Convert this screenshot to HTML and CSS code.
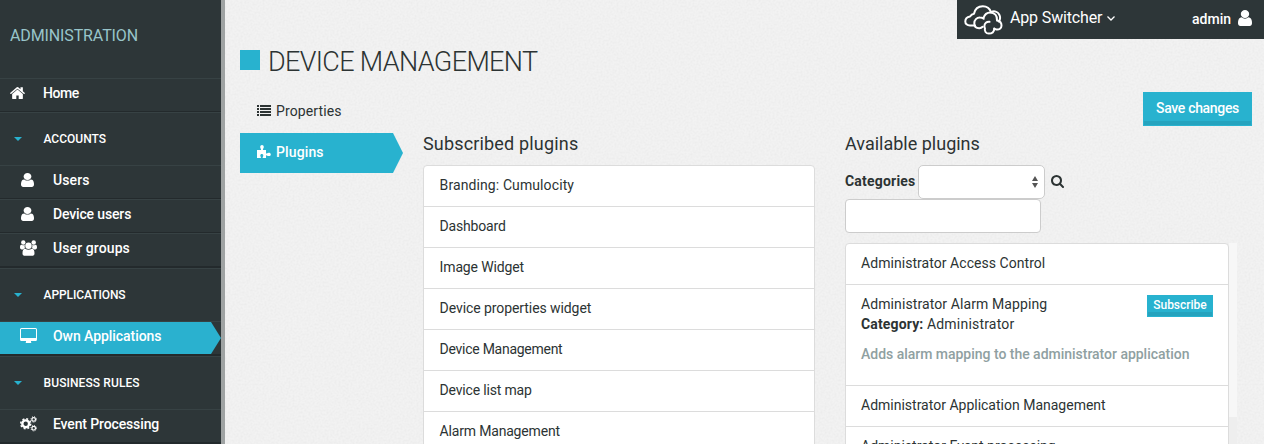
FILE: index.html
```html
<!DOCTYPE html>
<html lang="en">
<head>
<meta charset="utf-8">
<title>Administration</title>
<link rel="stylesheet" href="styles.css">
</head>
<body>
<svg class="defs" aria-hidden="true">
  <symbol id="user" viewBox="256 128 1280 1536" preserveAspectRatio="none"><path d="M1536 1399q0 109-62.500 187t-150.500 78h-854q-88 0-150.500-78t-62.500-187q0-85 8.500-160.500t31.500-152 58.500-131 94-89 134.500-34.500q131 128 313 128t313-128q76 0 134.500 34.500t94 89 58.500 131 31.500 152 8.500 160.500zm-256-887q0 159-112.500 271.500t-271.500 112.500-271.500-112.500-112.500-271.500 112.500-271.500 271.500-112.500 271.500 112.500 112.500 271.500z"/></symbol>
</svg>
<div class="app">
  <aside class="sidebar">
    <div class="brand"><span class="t-brand">ADMINISTRATION</span></div>
    <a class="row home"><svg class="icon-home" viewBox="89 240 1614 1296" preserveAspectRatio="none"><path d="M1472 992v480q0 26-19 45t-45 19h-384v-384h-256v384h-384q-26 0-45-19t-19-45v-480q0-1 .5-3t.5-3l575-474 575 474q1 2 1 6zm223-69l-62 74q-8 9-21 11h-3q-13 0-21-7l-692-577-692 577q-12 8-24 7-13-2-21-11l-62-74q-8-10-7-23.500t11-21.500l719-599q32-26 76-26t76 26l244 204v-195q0-14 9-23t23-9h192q14 0 23 9t9 23v408l219 182q10 8 11 21.500t-7 23.500z"/></svg><span class="t-home">Home</span></a>
    <div class="section"><i class="caret"></i><span class="t-accounts">ACCOUNTS</span></div>
    <div class="group">
      <a class="row"><span class="ico"><svg class="icon-user"><use href="#user"/></svg></span><span class="t-users">Users</span></a>
      <a class="row"><span class="ico"><svg class="icon-user"><use href="#user"/></svg></span><span class="t-devusers">Device users</span></a>
      <a class="row"><span class="ico wide"><svg class="icon-users" viewBox="0 0 17 16"><circle cx="3.300" cy="2.500" r="2.200"/><circle cx="13.700" cy="2.500" r="2.200"/><path d="M0 7.200C0 5.400.8 4.700 2 4.900c1 .5 2 .5 3 .1-.6 1.200-.4 2.300.1 3.200-1 .1-1.600.6-2.100 1.200H1.800C.6 9.400 0 8.600 0 7.200zM17 7.200c0-1.800-.8-2.500-2-2.300-1 .5-2 .5-3 .1.600 1.200.4 2.300-.1 3.200 1 .1 1.600.6 2.100 1.200h1.200c1.200 0 1.800-.8 1.800-2.200z"/><circle cx="8.500" cy="5.800" r="3.200"/><path d="M2.500 13.400c0-2.700.7-4.600 2.800-4.600 1.900 1.400 4.500 1.400 6.400 0 2.100 0 2.800 1.900 2.800 4.600 0 1.500-.9 2.400-2.200 2.400H4.700c-1.300 0-2.200-.9-2.200-2.400z"/></svg></span><span class="t-groups">User groups</span></a>
    </div>
    <div class="section"><i class="caret"></i><span class="t-apps">APPLICATIONS</span></div>
    <div class="group">
      <a class="row"><span class="active"><span class="ico wide"><svg class="icon-desktop" viewBox="0 0 17 15"><path fill-rule="evenodd" d="M1.500 0h14A1.500 1.500 0 0 1 17 1.500v10a1.500 1.500 0 0 1-1.500 1.500H11v1.200l.6.8H5.400l.6-.8V13H1.500A1.500 1.500 0 0 1 0 11.500v-10A1.500 1.500 0 0 1 1.500 0zM1 1.500V10h15V1.500a.5.500 0 0 0-.5-.5h-14a.5.500 0 0 0-.5.500z"/></svg></span><span class="t-own">Own Applications</span></span></a>
    </div>
    <div class="section"><i class="caret"></i><span class="t-rules">BUSINESS RULES</span></div>
    <div class="group">
      <a class="row"><span class="ico wide"><svg class="icon-cogs" viewBox="0 0 17 16"><g fill="none" stroke="#fff"><circle cx="5.700" cy="7.800" r="3.400" stroke-width="2.400"/><circle cx="5.700" cy="7.800" r="5" stroke-width="1.500" stroke-dasharray="1.960 1.960"/><circle cx="13.700" cy="3.400" r="1.800" stroke-width="1.200"/><circle cx="13.700" cy="3.400" r="2.700" stroke-width="1" stroke-dasharray="1.060 1.060"/><circle cx="13.700" cy="12.200" r="1.800" stroke-width="1.200"/><circle cx="13.700" cy="12.200" r="2.700" stroke-width="1" stroke-dasharray="1.060 1.060"/></g></svg></span><span class="t-event">Event Processing</span></a>
    </div>
  </aside>
  <main class="main">
    <header class="head">
      <h1><i class="square"></i><span class="t-title">DEVICE MANAGEMENT</span></h1>
      <div class="topbar">
        <svg class="icon-cloud" viewBox="0 0 39 30"><g fill="none" stroke="#fff" stroke-width="2" stroke-linecap="round" stroke-linejoin="round"><path d="M11 20.500H6C3 20.500 1.300 18.800 1.300 16.500c0-2.700 2-4.500 4.700-5 1-1.700 2.300-2.700 4-2.800C11 4 14.500 1.200 18.800 1.200c3.700 0 7 2.300 8.200 5.900"/><path d="M18.700 21.800c-1 1-2.200 1.500-3.600 1.400-2.900-.1-4.800-2.200-4.800-5 0-3.300 2.400-5.700 5.700-5.600 1.500 0 2.700.4 3.700 1.200M19.500 13C20.500 9.700 23 7.500 26.300 7.500c4.200 0 7.200 3.200 6.700 8 2.700.5 4.600 2.500 4.500 5.200-.1 2.700-2.300 4.200-5 3.800-1-.2-1.700-.5-2.300-1"/><path d="M25.500 16.800c-2.900-.3-5 1.500-5.100 4.200 0 1 .2 1.800.6 2.300-.9 2.800 1 5.300 3.800 5.300 3.200 0 5.200-1.800 5.500-4.800"/><path d="M27 7.200c3.200-1.800 6.700-.5 8.200 2.200 1.400 2.600 1.200 5-.4 7"/></g></svg>
        <span class="t-switch">App Switcher</span>
        <svg class="icon-angle" viewBox="0 0 8 5"><path d="M.5.500 4 4 7.500.5" fill="none" stroke="#fff" stroke-width="1.300"/></svg>
        <span class="t-admin">admin</span>
        <svg class="icon-me"><use href="#user"/></svg>
      </div>
    </header>
    <div class="body">
      <nav class="tabs">
        <a class="tab"><svg class="icon-list" viewBox="0 0 14 11"><path d="M0 0h2v2H0zM3 0h11v2H3zM0 3h2v2H0zM3 3h11v2H3zM0 6h2v2H0zM3 6h11v2H3zM0 9h2v2H0zM3 9h11v2H3z"/></svg><span class="t-props">Properties</span></a>
        <a class="tab current"><svg class="icon-puzzle" viewBox="0 0 14 13"><path d="M0 5h3.600c.6 0 .6-.5.300-1C3.500 3.300 3.200 2.600 3.200 2 3.200.8 4 0 5 0s1.800.8 1.800 2c0 .6-.4 1.300-.8 2-.2.500-.1 1 .5 1H9v3c0 .6.400.7.900.4.600-.4 1.200-.7 1.900-.7 1.200 0 2 .7 2 1.700s-.8 1.700-2 1.700c-.7 0-1.300-.3-1.900-.7-.5-.3-.9-.2-.9.400V13H6.300c-.7-.1-.8-.6-.5-1.100.3-.5.500-.9.500-1.400 0-.8-.7-1.400-1.500-1.400s-1.500.6-1.500 1.400c0 .5.200.9.500 1.400.3.500.2 1-.5 1.100H0z"/></svg><span class="t-plugins">Plugins</span></a>
      </nav>
      <section class="content">
        <div class="actions"><button class="save"><span class="t-save">Save changes</span></button></div>
        <div class="columns">
          <div class="col-sub">
            <h2><span class="t-sub">Subscribed plugins</span></h2>
            <ul class="list subscribed">
              <li><span class="t-l1">Branding: Cumulocity</span></li>
              <li><span class="t-l2">Dashboard</span></li>
              <li><span class="t-l3">Image Widget</span></li>
              <li><span class="t-l4">Device properties widget</span></li>
              <li><span class="t-l5">Device Management</span></li>
              <li><span class="t-l6">Device list map</span></li>
              <li><span class="t-l7">Alarm Management</span></li>
            </ul>
          </div>
          <div class="col-avail">
            <h2><span class="t-avail">Available plugins</span></h2>
            <div class="filter"><b class="t-cat">Categories</b><div class="select"><svg class="icon-sort" viewBox="0 0 6 12"><path d="M0 4.900 3 0l3 4.900zM0 7.100 3 12l3-4.900z"/></svg></div><svg class="icon-search" viewBox="64 128 1664 1664"><path d="M1216 832q0-185-131.500-316.500t-316.500-131.500-316.500 131.500-131.500 316.500 131.500 316.500 316.500 131.500 316.500-131.500 131.500-316.500zm512 832q0 52-38 90t-90 38q-54 0-90-38l-343-342q-179 124-399 124-143 0-273.500-55.500t-225-150-150-225-55.500-273.500 55.500-273.500 150-225 225-150 273.500-55.500 273.500 55.500 225 150 150 225 55.500 273.500q0 220-124 399l343 343q37 37 37 90z"/></svg></div>
            <input class="query" type="text" aria-label="Search">
            <div class="scroller">
              <ul class="list">
                <li><span class="t-a1">Administrator Access Control</span></li>
                <li class="open">
                  <div><div><span class="t-a2">Administrator Alarm Mapping</span></div>
                  <div><b class="t-catg">Category:</b> <span class="t-adm">Administrator</span></div>
                  <p><span class="t-adds">Adds alarm mapping to the administrator application</span></p></div>
                  <button class="subscribe"><span class="t-subs">Subscribe</span></button>
                </li>
                <li><span class="t-a3">Administrator Application Management</span></li>
                <li><span class="t-a4">Administrator Event processing</span></li>
              </ul>
              <div class="track"><i class="thumb"></i></div>
            </div>
          </div>
        </div>
      </section>
    </div>
  </main>
</div>
</body>
</html>
```
FILE: styles.css
```css
* { box-sizing: border-box; }
body { margin: 0; height: 444px; overflow: hidden; font: 14px/20px Roboto, "Liberation Sans", sans-serif; color: #2c3333; }
h1, h2, p, ul { margin: 0; padding: 0; font-weight: 400; list-style: none; }
svg { display: block; flex: none; fill: currentColor; }
span, b { white-space: nowrap; }
.defs { display: none; }
.app { display: flex; height: 444px; overflow: hidden; }

.sidebar { width: 225px; flex: none; background: #2d3638; border-right: 4px solid #9fa3a3; color: #fff; font-weight: 500; }
.brand { height: 78px; padding: 26px 0 0 10px; font-size: 16px; font-weight: 400; color: #98c5ca; letter-spacing: -.12px; }
.row { display: flex; align-items: center; height: 34px; border-top: 1px solid #374244; border-bottom: 1px solid #232a2c; padding-bottom: 4px; }
.home { padding: 0 0 4px 10px; }
.home span { margin-left: 18px; }
.icon-home { width: 15px; height: 12px; }
.section { display: flex; align-items: center; height: 53px; border-top: 1px solid #374244; padding-left: 14px; font-size: 12px; }
.section span { margin-left: 22px; }
.caret { border: solid transparent; border-width: 4px 3.500px 0; border-width: 4px 4px 0; margin-right: -.5px; border-top-color: #28b2cf; }
.group { border-bottom: 1px solid #232a2c; }
.ico { width: 53px; flex: none; padding-left: 21px; }
.ico.wide { padding-left: 20px; }
.icon-user { width: 13px; height: 14px; }
.icon-users { width: 17px; height: 16px; }
.icon-desktop { width: 17px; height: 15px; margin-bottom: 2px; }
.icon-cogs { width: 17px; height: 16px; }
.active { display: flex; align-items: center; flex: 1; height: 32px; margin-bottom: -4px; padding-bottom: 4px; background: #2ab1cf; clip-path: polygon(0 0, 211px 0, 100% 50%, 211px 100%, 0 100%); }

.main { flex: 1; padding-left: 15px; background: #f2f2f2 url("data:image/svg+xml,%3Csvg xmlns='http://www.w3.org/2000/svg' width='200' height='200'%3E%3Cfilter id='n'%3E%3CfeTurbulence type='fractalNoise' baseFrequency='.5' numOctaves='3' stitchTiles='stitch'/%3E%3CfeColorMatrix values='0 0 0 0 0 0 0 0 0 0 0 0 0 0 0 .05 0 0 0 -.018'/%3E%3C/filter%3E%3Crect width='200' height='200' filter='url(%23n)'/%3E%3C/svg%3E"); }
.head { display: flex; justify-content: space-between; align-items: flex-start; height: 91px; }
h1 { display: flex; align-items: center; padding-top: 44px; font-size: 27px; line-height: 32px; font-weight: 300; }
.t-title { letter-spacing: -.65px; padding-top: 2px; margin-bottom: -2px; }
.square { width: 20px; height: 20px; margin-right: 8px; background: #28b2cf; }
.topbar { display: flex; align-items: center; width: 307px; height: 39px; padding: 0 12px 0 7px; background: #2d3638; color: #fff; }
.icon-cloud { width: 39px; height: 30px; }
.t-switch { font-size: 16px; margin: 0 5px 3px 7px; letter-spacing: -.15px; }
.icon-angle { width: 8px; height: 5px; margin-bottom: 2px; }
.t-admin { margin: 0 0 2px auto; font-weight: 500; }
.icon-me { width: 14px; height: 16px; margin: 0 0 3px 7px; }

.t-home { letter-spacing: -.4px; }
.t-apps { letter-spacing: -.08px; }
.t-rules, .t-groups, .t-users { letter-spacing: .1px; }
.t-devusers { letter-spacing: -.15px; }
.t-own { letter-spacing: -.06px; }
.t-event { letter-spacing: -.13px; }
.t-props, .t-plugins { letter-spacing: .12px; }
.t-save { letter-spacing: -.33px; }
.t-sub { letter-spacing: .17px; }
.t-cat { letter-spacing: .2px; }
.t-l1 { letter-spacing: .1px; }
.t-l2, .t-l6, .t-l7 { letter-spacing: -.18px; }
.t-l3 { letter-spacing: -.15px; }
.t-l4 { letter-spacing: -.08px; }
.t-l5 { letter-spacing: -.27px; }
.t-a1 { letter-spacing: .05px; }
.t-a2 { letter-spacing: .1px; }
.t-catg { letter-spacing: .15px; }
.t-adm { letter-spacing: .2px; }
.t-adds { letter-spacing: -.02px; }

.body { display: flex; }
.tabs { width: 183px; flex: none; }
.tab { display: flex; align-items: center; height: 40px; margin-bottom: 2px; padding: 0 0 1px 17px; }
.tab span { margin-left: 5px; }
.current { width: 163px; padding-bottom: 2px; background: #28b2cf; color: #fff; font-weight: 500; clip-path: polygon(0 0, 153px 0, 100% 50%, 153px 100%, 0 100%); }
.icon-list { width: 14px; height: 11px; }
.icon-puzzle { width: 14px; height: 13px; margin-bottom: 1px; }
.content { flex: 1; padding: 1px 12px 0 0; }
.actions { display: flex; justify-content: flex-end; height: 34px; }
button { border: 1px solid #28b2cf; background: #28b2cf; box-shadow: inset 0 -4px #25a3be; color: #fff; font: 500 14px/20px Roboto, sans-serif; padding: 0; display: flex; justify-content: center; }
.save { width: 109px; height: 34px; padding-top: 5px; }
.columns { display: flex; gap: 30px; padding-top: 8px; }
h2 { font-size: 18px; line-height: 20px; height: 31px; }
.col-sub { width: 392px; }
.col-avail { width: 392px; }
.list { background: #fff; border: 1px solid #dcdcdc; border-radius: 4px 4px 0 0; }
.list li { padding: 9px 15px 11px; height: 41px; border-bottom: 1px solid #dcdcdc; }
.subscribed li { padding-left: 15.600px; }
.list li.open { display: flex; justify-content: space-between; height: 101px; }
.open p { margin-top: 10px; color: #8fa0a1; font-weight: 500; width: 270px; }
.subscribe { width: 66px; height: 22px; margin-top: 1px; font-size: 12px; line-height: 18px; }
.filter { display: flex; align-items: center; height: 34px; }
.filter b { width: 70px; padding-bottom: 2px; }
.select { display: flex; align-items: center; justify-content: flex-end; width: 127px; height: 34px; margin-left: 3px; padding-right: 6px; background: #fff; border: 1px solid #ccc; border-radius: 5px; }
.icon-sort { width: 6px; height: 12px; color: #555; }
.icon-search { width: 13px; height: 13px; margin: 0 0 2px 6px; }
.query { display: block; width: 196px; height: 34px; border: 1px solid #ccc; border-radius: 4px; background: #fff; margin: 0 0 10px; }
.scroller { display: flex; }
.scroller .list { width: 384px; }
.track { width: 8px; background: #eeeeee; }
.thumb { display: block; height: 174px; background: #f7f7f7; }
```
